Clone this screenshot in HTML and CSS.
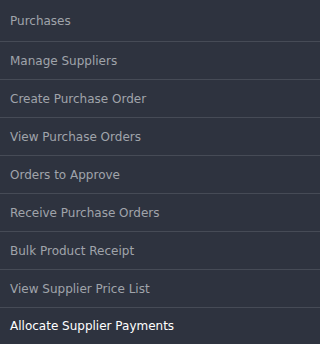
FILE: index.html
```
<!DOCTYPE html>
<html lang="en">
<head>
<meta charset="utf-8">
<title>Purchases menu</title>
<link rel="stylesheet" href="styles.css">
</head>
<body>
<nav class="menu">
  <div class="item first">Purchases</div>
  <div class="item">Manage Suppliers</div>
  <div class="item">Create Purchase Order</div>
  <div class="item">View Purchase Orders</div>
  <div class="item">Orders to Approve</div>
  <div class="item">Receive Purchase Orders</div>
  <div class="item">Bulk Product Receipt</div>
  <div class="item">View Supplier Price List</div>
  <div class="item last active">Allocate Supplier Payments</div>
</nav>
</body>
</html>
```
FILE: styles.css
```
html, body {
  margin: 0;
  padding: 0;
  background: #ffffff;
}
.menu {
  width: 100%;
  display: flex;
  flex-direction: column;
  background: #2e333f;
  font-family: "DejaVu Sans", Verdana, sans-serif;
  font-size: 12px;
}
.item {
  height: 37px;
  display: flex;
  align-items: center;
  padding-left: 10px;
  color: #a0a4ab;
  border-bottom: 1px solid #464b56;
  white-space: nowrap;
}
.item.first {
  height: 41px;
}
.item.last {
  height: 36px;
  border-bottom: none;
}
.item.active {
  color: #ffffff;
}
```
